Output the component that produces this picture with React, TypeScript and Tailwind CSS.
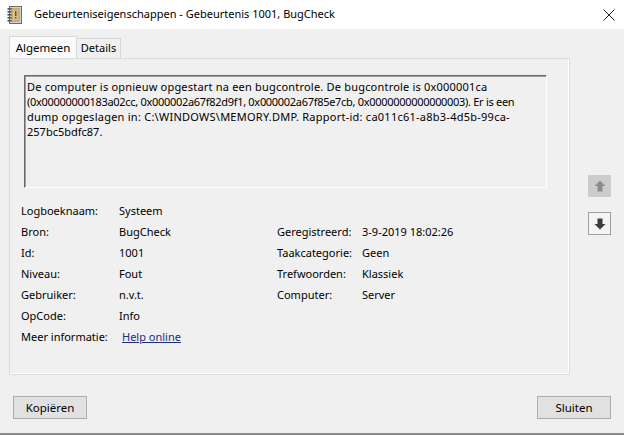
import React from "react";

const font = { fontFamily: '"Noto Sans", "Open Sans", sans-serif' };

function EventIcon() {
  return (
    <svg width="16" height="18" viewBox="0 0 16 18">
      <rect x="2.5" y="0.5" width="12" height="17" fill="#d8d4cc" stroke="#6b6b6b" />
      <rect x="4" y="2" width="9" height="14" fill="#b9ad93" />
      <rect x="6" y="4" width="5" height="10" fill="#e6c25e" />
      <rect x="8" y="5" width="1.5" height="5" fill="#7a4a10" />
      <rect x="8" y="11" width="1.5" height="1.5" fill="#7a4a10" />
      {[2, 5, 8, 11, 14].map((y) => (
        <rect key={y} x="0.5" y={y} width="4" height="1.6" fill="#555" />
      ))}
    </svg>
  );
}

function Row({ label, value, link }: { label: string; value: string; link?: boolean }) {
  return (
    <div className="flex h-[21px] items-center">
      <div className="w-[98px] shrink-0">{label}</div>
      {link ? (
        <div className="ml-[3px] text-[#1b2a8c] underline">{value}</div>
      ) : (
        <div>{value}</div>
      )}
    </div>
  );
}

function RRow({ label, value }: { label: string; value: string }) {
  return (
    <div className="flex h-[21px] items-center">
      <div className="w-[85px] shrink-0">{label}</div>
      <div>{value}</div>
    </div>
  );
}

export default function App() {
  return (
    <div
      className="flex h-[435px] w-[624px] flex-col overflow-hidden bg-[#f0f0f0] text-[11px] text-black"
      style={font}
    >
      {/* Title bar */}
      <div className="flex h-[29px] shrink-0 items-center bg-white pl-[7px]">
        <EventIcon />
        <div className="ml-[11px] text-[11px]">Gebeurteniseigenschappen - Gebeurtenis 1001, BugCheck</div>
        <div className="ml-auto flex h-[29px] w-[30px] items-center justify-center">
          <svg width="12" height="12" viewBox="0 0 12 12">
            <path d="M0.5 0.5 L11.5 11.5 M11.5 0.5 L0.5 11.5" stroke="#222" strokeWidth="1" />
          </svg>
        </div>
      </div>

      {/* Body */}
      <div className="flex flex-1 flex-col border-b-2 border-[#8a8a8a]">
        {/* Tabs */}
        <div className="mt-[8px] flex h-[21px] items-end pl-[9px]">
          <div className="relative z-10 flex h-[22px] w-[68px] items-center justify-center border border-b-0 border-[#d9d9d9] bg-[#fafafa] text-[11.5px]">
            Algemeen
          </div>
          <div className="flex h-[20px] w-[44px] items-center justify-center border border-b-0 border-l-0 border-[#d9d9d9] bg-[#f0f0f0]">
            Details
          </div>
        </div>

        <div className="flex">
          {/* Panel */}
          <div className="ml-[9px] h-[317px] w-[561px] border border-[#dcdcdc] bg-[#f0f0f0] px-[11px] pt-[16px] shadow-[inset_-1px_-1px_0_#ffffff]">
            <div className="ml-[3px] h-[113px] w-[523px] overflow-hidden whitespace-nowrap border border-l-[#696969] border-t-[#696969] border-r-white border-b-white bg-[#f0f0f0] pl-[2px] pt-[3px] leading-[15px] shadow-[inset_1px_1px_0_#a0a0a0]">
              <div className="tracking-[0.2px]">
                De computer is opnieuw opgestart na een bugcontrole. De bugcontrole is 0x000001ca
              </div>
              <div className="tracking-[-0.3px]">
                (0x00000000183a02cc, 0x000002a67f82d9f1, 0x000002a67f85e7cb, 0x0000000000000003). Er is een
              </div>
              <div className="tracking-[0.25px]">
                dump opgeslagen in: C:\WINDOWS\MEMORY.DMP. Rapport-id: ca011c61-a8b3-4d5b-99ca-
              </div>
              <div>257bc5bdfc87.</div>
            </div>

            <div className="mt-[13px] flex">
              <div className="w-[256px]">
                <Row label="Logboeknaam:" value="Systeem" />
                <Row label="Bron:" value="BugCheck" />
                <Row label="Id:" value="1001" />
                <Row label="Niveau:" value="Fout" />
                <Row label="Gebruiker:" value="n.v.t." />
                <Row label="OpCode:" value="Info" />
                <Row label="Meer informatie:" value="Help online" link />
              </div>
              <div className="pt-[21px]">
                <RRow label="Geregistreerd:" value="3-9-2019 18:02:26" />
                <RRow label="Taakcategorie:" value="Geen" />
                <RRow label="Trefwoorden:" value="Klassiek" />
                <RRow label="Computer:" value="Server" />
              </div>
            </div>
          </div>

          {/* Arrow buttons */}
          <div className="ml-[18px] flex flex-col pt-[117px]">
            <div className="flex h-[22px] w-[23px] items-center justify-center bg-[#cccccc]">
              <svg width="12" height="12" viewBox="0 0 12 12">
                <path d="M6 0.5 L11.5 6 L8.5 6 L8.5 11.5 L3.5 11.5 L3.5 6 L0.5 6 Z" fill="#8c8c8c" />
              </svg>
            </div>
            <div className="mt-[15px] flex h-[23px] w-[23px] items-center justify-center border border-[#a0a0a0] bg-[#f4f4f4]">
              <svg width="12" height="12" viewBox="0 0 12 12">
                <path d="M6 11.5 L11.5 6 L8.5 6 L8.5 0.5 L3.5 0.5 L3.5 6 L0.5 6 Z" fill="#3c3c3c" />
              </svg>
            </div>
          </div>
        </div>

        {/* Bottom buttons */}
        <div className="mt-[21px] flex px-[13px]">
          <div className="flex h-[23px] w-[74px] items-center justify-center border border-[#adadad] bg-[#e1e1e1] text-[11.5px]">
            Kopiëren
          </div>
          <div className="ml-auto flex h-[23px] w-[74px] items-center justify-center border border-[#adadad] bg-[#e1e1e1] text-[11.5px]">
            Sluiten
          </div>
        </div>
      </div>
    </div>
  );
}
